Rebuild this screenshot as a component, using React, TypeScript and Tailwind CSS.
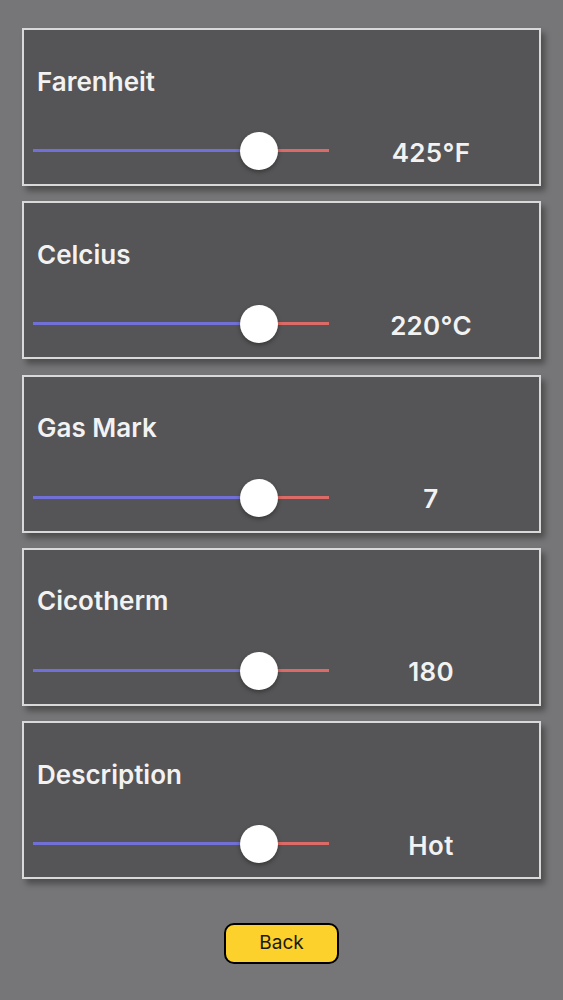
import React from 'react';

type Row = { label: string; value: string };

const rows: Row[] = [
  { label: 'Farenheit', value: '425°F' },
  { label: 'Celcius', value: '220°C' },
  { label: 'Gas Mark', value: '7' },
  { label: 'Cicotherm', value: '180' },
  { label: 'Description', value: 'Hot' },
];

// Slider with blue filled part, red rest and a white round thumb
const Slider = ({ pct }: { pct: number }) => {
  return (
    <div className="relative h-[38px] w-[296px]">
      <div className="absolute left-0 right-0 top-[17px] flex h-[3px]">
        <div className="h-full bg-[#7070d6]" style={{ width: `${pct}%` }} />
        <div className="h-full flex-1 bg-[#dc6a66]" />
      </div>
      <div
        className="absolute top-0 h-[38px] w-[38px] -translate-x-1/2 rounded-full bg-white shadow-[0_2px_4px_rgba(0,0,0,0.35)]"
        style={{ left: `${pct}%` }}
      />
    </div>
  );
};

const Card = ({ label, value }: Row) => {
  return (
    <div className="flex h-[158px] flex-col border-2 border-[#d9d9d9] bg-[#555456] shadow-[4px_5px_6px_rgba(0,0,0,0.35)]">
      <div className="pl-[13px] pt-[35.5px] text-[26px] font-semibold leading-[32px] text-[#f2f2f2]">
        {label}
      </div>
      <div className="mt-[34.5px] flex items-center pl-[9px]">
        <Slider pct={76.4} />
        <div className="flex-1 pr-[6px] pt-[3px] text-center text-[26px] font-semibold leading-[32px] tracking-[0.3px] text-[#f2f2f2]">
          {value}
        </div>
      </div>
    </div>
  );
};

export default function App() {
  return (
    <div
      className="flex min-h-[1000px] w-full flex-col bg-[#767577] px-[22px] pt-[28px]"
      style={{ fontFamily: 'Inter, "Noto Sans", sans-serif' }}
    >
      <div className="flex flex-col gap-[15.25px]">
        {rows.map((r) => (
          <Card key={r.label} label={r.label} value={r.value} />
        ))}
      </div>
      <div className="mt-[44px] flex justify-center">
        <button className="h-[41px] w-[115px] rounded-[10px] border-2 border-black bg-[#fdd12b] text-[19px] text-[#1a1a1a]">
          Back
        </button>
      </div>
    </div>
  );
}
